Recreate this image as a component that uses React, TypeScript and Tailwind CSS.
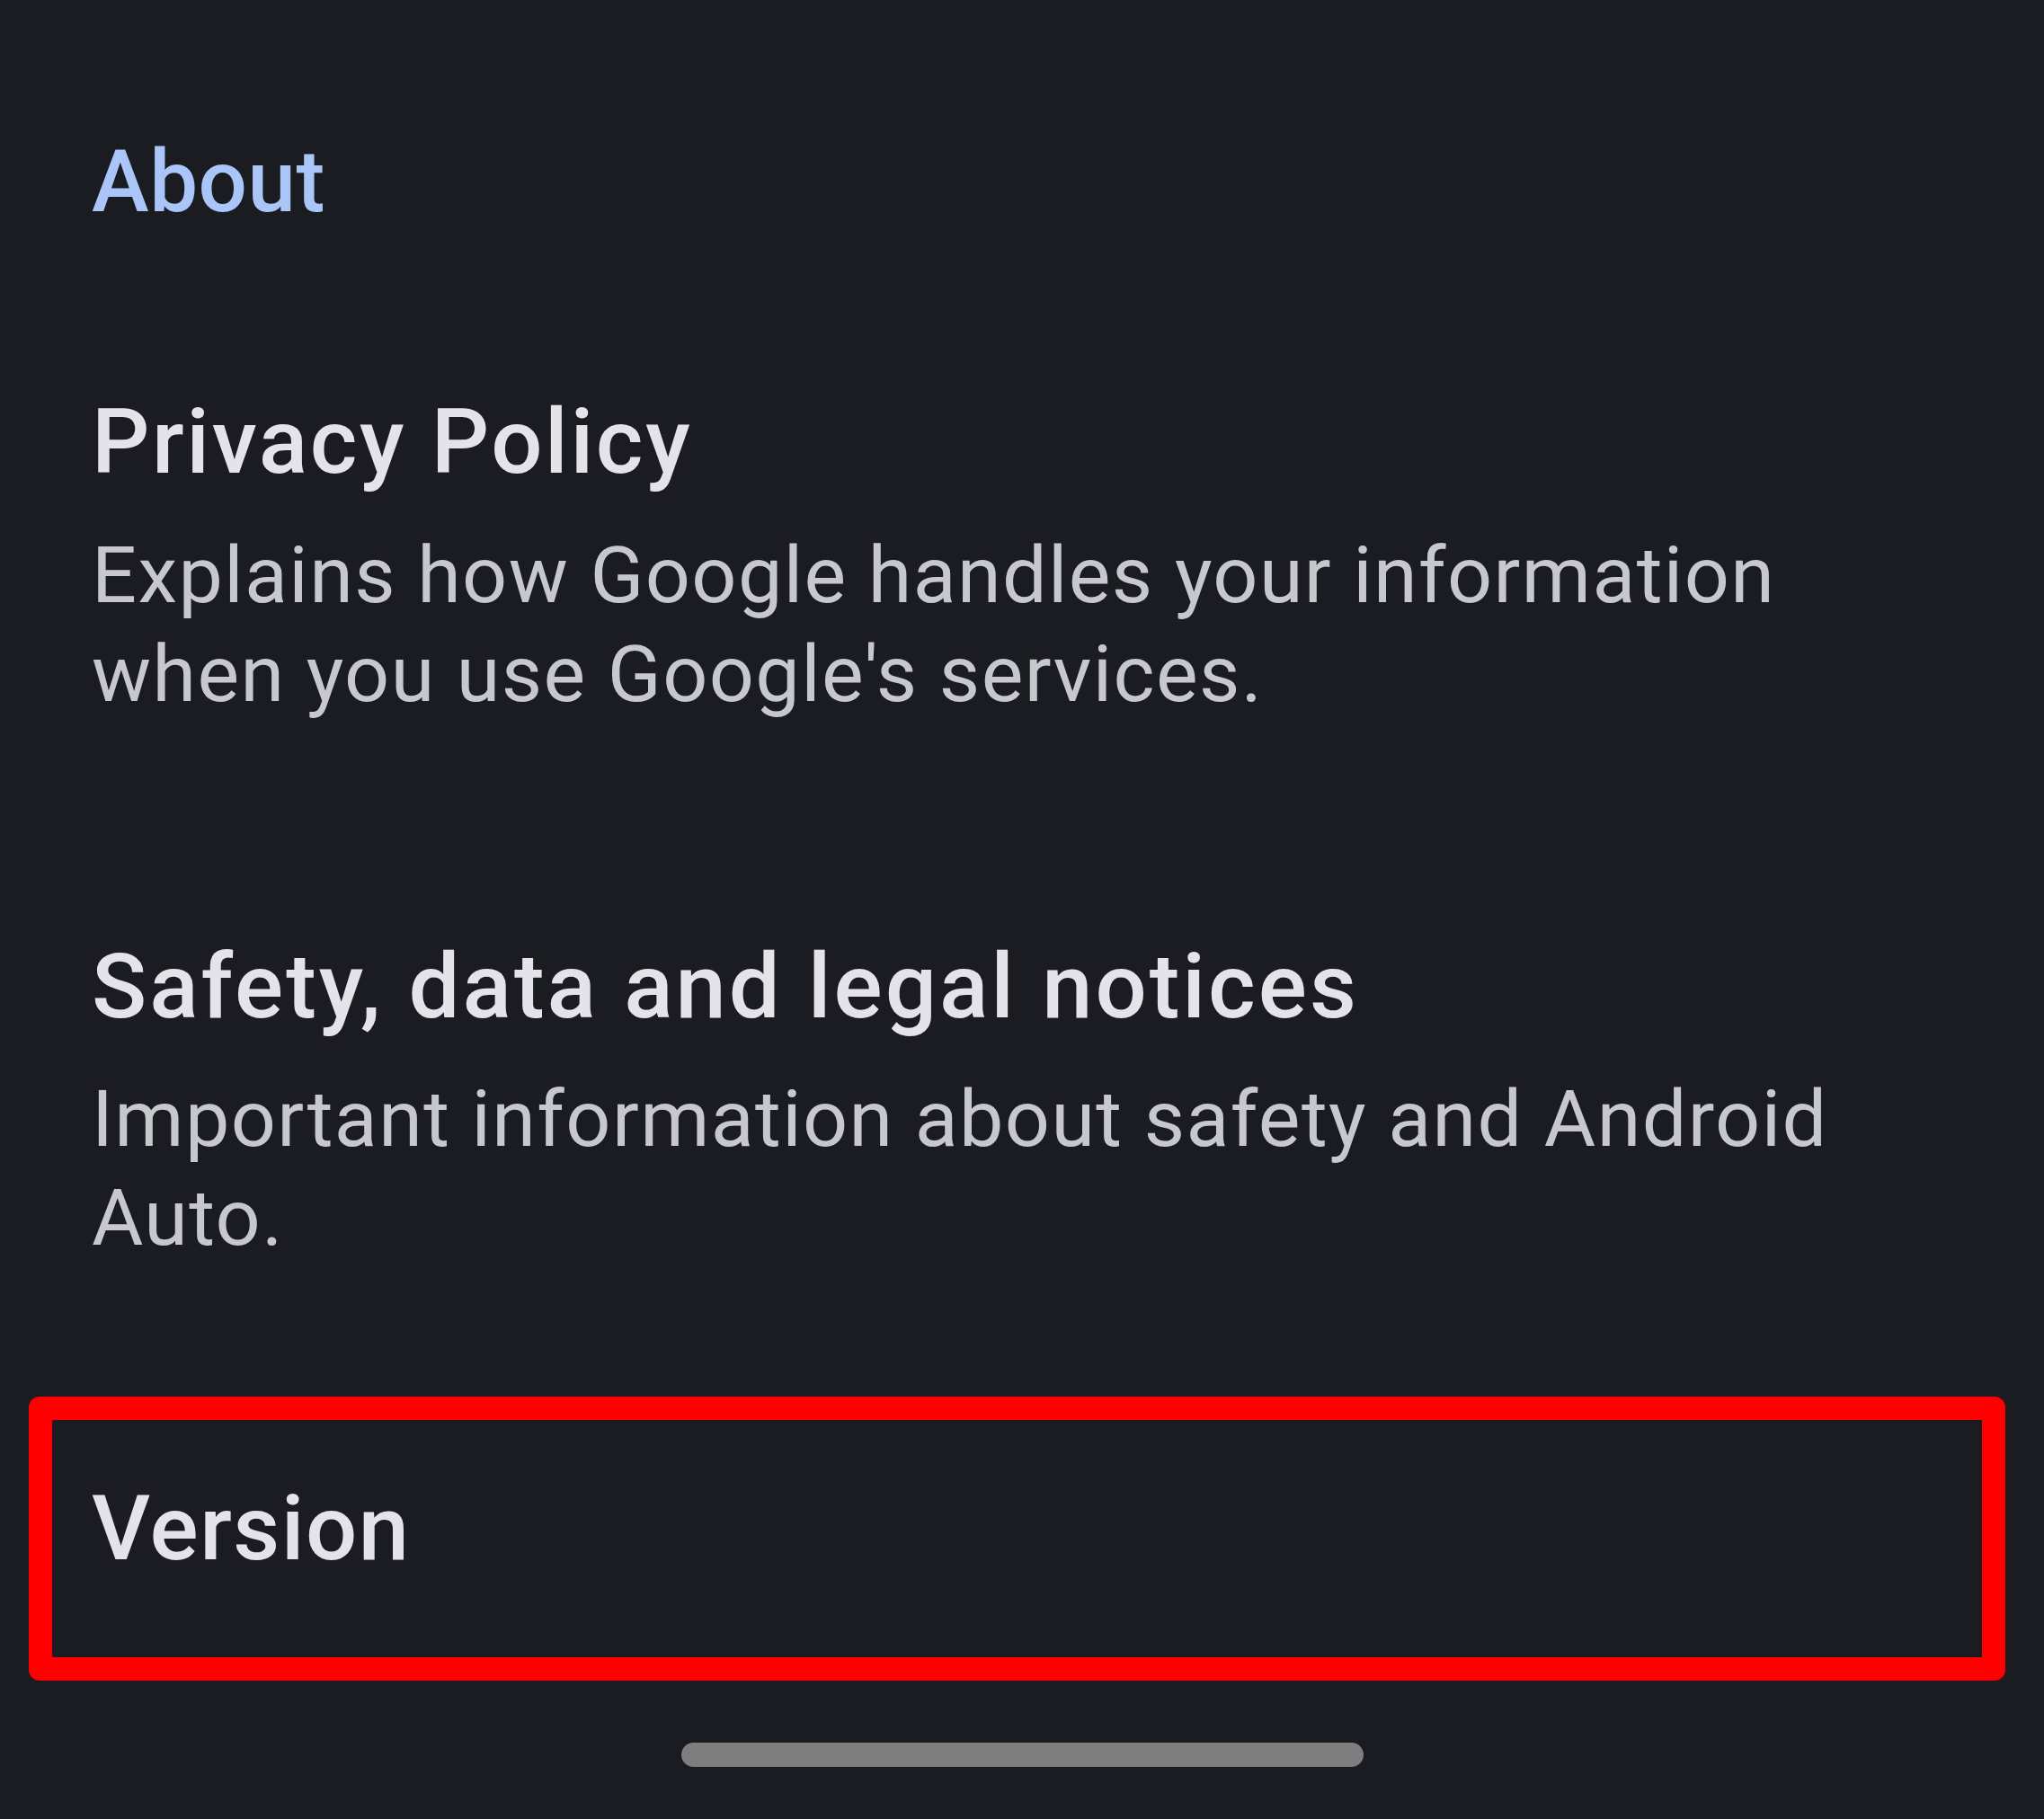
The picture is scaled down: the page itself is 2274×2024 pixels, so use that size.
export default function App() {
  const font = { fontFamily: "Roboto, 'Noto Sans', Arial, sans-serif" };
  return (
    <div
      className="w-[2274px] h-[2024px] bg-[#1b1c21] flex flex-col overflow-hidden"
      style={font}
    >
      <div className="pt-[142px] pl-[102px] pr-[106px]">
        <div className="text-[96px] leading-[120px] font-medium text-[#aac5f7] tracking-[0.5px]">
          About
        </div>
      </div>

      <div className="mt-[170px] pl-[102px] pr-[106px]">
        <div className="text-[101px] leading-[120px] font-medium text-[#e4e3ea] tracking-[2.6px]">
          Privacy Policy
        </div>
        <div className="mt-[33px] text-[88px] leading-[110px] text-[#c7c7ce] tracking-[1.4px]">
          Explains how Google handles your information when you use Google's services.
        </div>
      </div>

      <div className="mt-[233px] pl-[102px] pr-[106px]">
        <div className="text-[101px] leading-[120px] font-medium text-[#e4e3ea] tracking-[3px]">
          Safety, data and legal notices
        </div>
        <div className="mt-[32px] text-[88px] leading-[110px] text-[#c7c7ce] tracking-[1.4px]">
          Important information about safety and Android Auto.
        </div>
      </div>

      <div className="mt-[144px] ml-[32px] mr-[43px] h-[316px] border-[26px] border-[#ff0000] rounded-[12px] pl-[44px] pt-[61px]">
        <div className="text-[101px] leading-[120px] font-medium text-[#e4e3ea] tracking-[1.5px]">
          Version
        </div>
      </div>

      <div className="mt-[69px] flex justify-center">
        <div className="w-[759px] h-[27px] rounded-full bg-[#7e7e7e]" />
      </div>
    </div>
  );
}
